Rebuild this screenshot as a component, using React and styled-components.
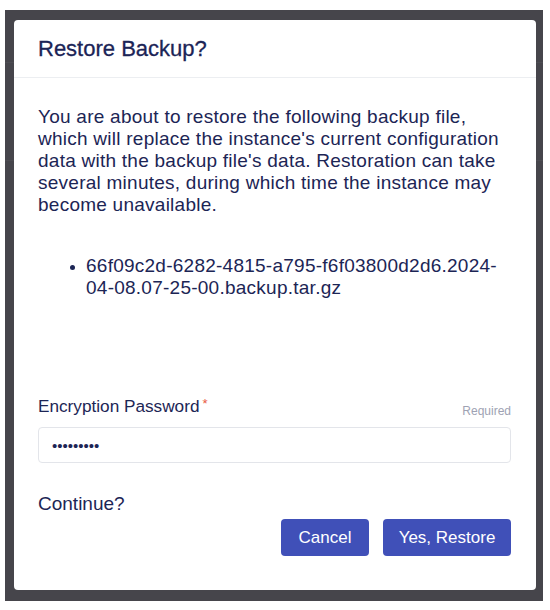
import React from "react";
import styled, { createGlobalStyle } from "styled-components";

const Global = createGlobalStyle`
  html, body { margin: 0; padding: 0; background: #ffffff; }
  body { font-family: "Liberation Sans", Arial, Helvetica, sans-serif; }
  * { box-sizing: border-box; }
`;

const Page = styled.div`
  width: 550px;
  height: 610px;
  padding: 10px 7px 9px 5px;
`;

const Backdrop = styled.div`
  position: relative;
  width: 538px;
  height: 591px;
  background: #46454b;
  padding: 10px 7px 11px 9px;
`;

const BgLine = styled.div`
  position: absolute;
  left: 0;
  right: 0;
  top: ${(p) => p.$top}px;
  height: 1px;
  background: #4d4c52;
`;

const Dialog = styled.div`
  position: relative;
  width: 522px;
  height: 570px;
  background: #ffffff;
  border-radius: 4px;
  display: flex;
  flex-direction: column;
  color: #1c2555;
`;

const Header = styled.div`
  height: 58px;
  padding: 0 24px;
  display: flex;
  align-items: center;
  border-bottom: 1px solid #eceef1;
`;

const Title = styled.h2`
  margin: 0;
  font-size: 22px;
  font-weight: 400;
  color: #1b2456;
  -webkit-text-stroke: 0.3px #1b2456;
`;

const Body = styled.div`
  padding: 28px 25px 0 24px;
  display: flex;
  flex-direction: column;
`;

const Paragraph = styled.p`
  margin: 0;
  font-size: 19px;
  letter-spacing: 0.25px;
  line-height: 22px;
  color: #1c2555;
`;

const FileList = styled.ul`
  margin: 39px 0 0 0;
  padding-left: 48px;
  font-size: 19px;
  letter-spacing: 0.25px;
  line-height: 22px;
  li::marker { font-size: 16px; }
`;

const Field = styled.div`
  margin-top: 96px;
  display: flex;
  flex-direction: column;
`;

const LabelRow = styled.div`
  display: flex;
  justify-content: space-between;
  align-items: flex-end;
  height: 21px;
`;

const Label = styled.label`
  font-size: 17.2px;
  line-height: 20px;
  color: #1c2555;
`;

const Star = styled.span`
  color: #e8573f;
  margin-left: 3px;
  font-size: 13px;
  vertical-align: 4px;
`;

const Hint = styled.span`
  font-size: 12px;
  color: #9ea2b3;
  line-height: 14px;
  margin-bottom: -2px;
`;

const Input = styled.input`
  margin-top: 11px;
  width: 473px;
  height: 36px;
  border: 1px solid #e3e5ea;
  border-radius: 4px;
  padding: 0 13px;
  font-size: 15px;
  color: #1c2555;
  font-family: "Liberation Sans", Arial, sans-serif;
  outline: none;
`;

const Question = styled.div`
  margin-top: 30px;
  font-size: 19px;
  line-height: 22px;
  color: #1c2555;
`;

const Actions = styled.div`
  margin-top: 4px;
  display: flex;
  justify-content: flex-end;
  gap: 14px;
`;

const Button = styled.button`
  height: 37px;
  width: ${(p) => p.$w}px;
  background: #4050b8;
  color: #ffffff;
  border: none;
  border-radius: 4px;
  font-family: "Liberation Sans", Arial, sans-serif;
  font-size: 17px;
  cursor: pointer;
`;

export default function App() {
  return (
    <>
      <Global />
      <Page>
        <Backdrop>
          <BgLine $top={52} />
          <BgLine $top={150} />
          <Dialog>
            <Header>
              <Title>Restore Backup?</Title>
            </Header>
            <Body>
              <Paragraph>
                You are about to restore the following backup file, which will
                replace the instance's current configuration data with the
                backup file's data. Restoration can take several minutes,
                during which time the instance may become unavailable.
              </Paragraph>
              <FileList>
                <li>66f09c2d-6282-4815-a795-f6f03800d2d6.2024-04-08.07-25-00.backup.tar.gz</li>
              </FileList>
              <Field>
                <LabelRow>
                  <Label>
                    Encryption Password<Star>*</Star>
                  </Label>
                  <Hint>Required</Hint>
                </LabelRow>
                <Input type="password" defaultValue="123456789" />
              </Field>
              <Question>Continue?</Question>
              <Actions>
                <Button $w={88}>Cancel</Button>
                <Button $w={128}>Yes, Restore</Button>
              </Actions>
            </Body>
          </Dialog>
        </Backdrop>
      </Page>
    </>
  );
}
